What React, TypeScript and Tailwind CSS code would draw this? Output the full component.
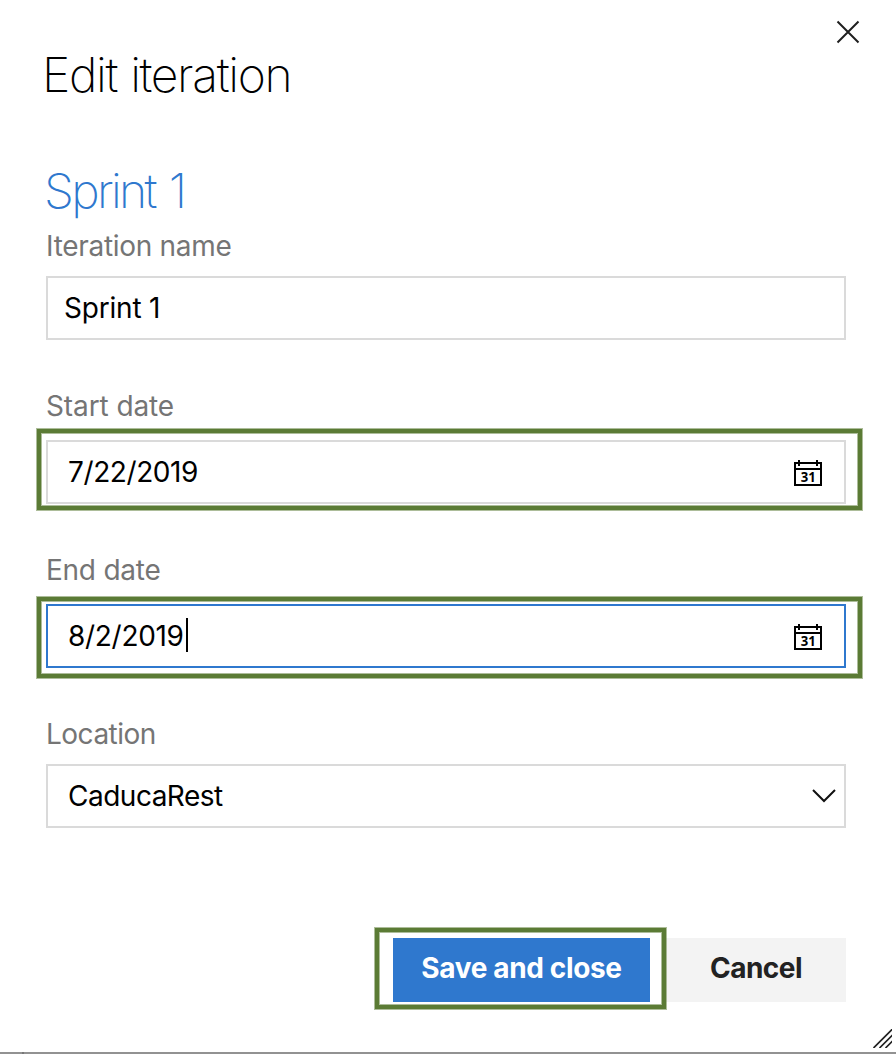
import type { ReactNode } from "react";

const highlight =
  "pointer-events-none absolute border-4 border-[#5b7b35] shadow-[0_0_0_1px_#5b7b3580,inset_0_0_0_1px_#5b7b3580]";

function Label({ children, className }: { children: ReactNode; className: string }) {
  return (
    <label className={`block h-8 w-max whitespace-nowrap text-[28px] leading-8 text-[#757575] ${className}`}>
      {children}
    </label>
  );
}

function CalendarIcon() {
  return (
    <svg width="28" height="28" viewBox="0 0 28 28" className="mt-1 shrink-0" aria-hidden="true">
      <path d="M1 3H27V25H1Z M1 9H27" fill="none" stroke="#000" strokeWidth="2" />
      <path d="M5 0V6M23 0V6" stroke="#000" strokeWidth="2" />
      <text x="14.3" y="22" textAnchor="middle" fontFamily="'Open Sans', sans-serif" fontWeight="700" fontSize="14" textLength="15" lengthAdjust="spacingAndGlyphs">
        31
      </text>
    </svg>
  );
}

function Box({ children, className = "border-[#dadada]" }: { children: ReactNode; className?: string }) {
  return (
    <div className={`relative flex h-16 w-[800px] items-center border-2 text-[28px] leading-8 text-black ${className}`}>
      {children}
    </div>
  );
}

export default function App() {
  return (
    <main className="relative flex h-[1054px] w-[896px] flex-col overflow-hidden bg-white pl-[46px] font-['Inter',sans-serif]">
      <button className="absolute top-5 left-[836px] size-6" aria-label="Close">
        <svg width="24" height="24" viewBox="0 0 24 24">
          <path d="M1.5 1.5L22.5 22.5M22.5 1.5L1.5 22.5" stroke="#1f1f1f" strokeWidth="2" />
        </svg>
      </button>

      <h1 className="-ml-1 mt-[45px] h-[60px] w-max text-[48px] leading-[60px] font-extralight tracking-[-1.35px] [word-spacing:1px] text-black">
        Edit iteration
      </h1>
      <h2 className="-ml-0.5 mt-[56px] h-[60px] w-max text-[48px] leading-[60px] font-extralight tracking-[-2.65px] [word-spacing:3px] text-[#2f78ce]">
        Sprint 1
      </h2>

      <div className="mt-[9px]">
        <Label className="tracking-[-0.3px]">Iteration name</Label>
        <div className="mt-[14px]">
          <Box>
            <span className="ml-4 tracking-[-0.2px]">Sprint 1</span>
          </Box>
        </div>
      </div>

      <div className="mt-[50px]">
        <Label className="tracking-[-0.1px]">Start date</Label>
        <div className="relative mt-[18px]">
          <Box>
            <span className="ml-5 flex-1 tracking-[-0.4px]">7/22/2019</span>
            <span className="mr-[22px]"><CalendarIcon /></span>
          </Box>
          <div className={`${highlight} -top-[11px] -left-[9px] h-[81px] w-[825px]`} />
        </div>
      </div>

      <div className="mt-[50px]">
        <Label className="tracking-[-0.25px]">End date</Label>
        <div className="relative mt-[18px]">
          <Box className="border-[#2f78ce]">
            <span className="ml-5 tracking-[-0.3px]">8/2/2019</span>
            <span className="absolute top-[12px] left-[138px] h-[34px] w-[2px] bg-black" />
            <span className="mr-[22px] ml-auto"><CalendarIcon /></span>
          </Box>
          <div className={`${highlight} -top-[7px] -left-[9px] h-[81px] w-[825px]`} />
        </div>
      </div>

      <div className="mt-[50px]">
        <Label className="tracking-[-0.5px]">Location</Label>
        <div className="mt-[14px]">
          <Box>
            <span className="ml-5 flex-1 tracking-[-0.5px]">CaducaRest</span>
            <svg width="24" height="14" viewBox="0 0 24 14" className="mr-2" aria-hidden="true">
              <path d="M1 1L12 12L23 1" fill="none" stroke="#111" strokeWidth="2" />
            </svg>
          </Box>
        </div>
      </div>

      <div className="mt-[110px] flex w-[800px] justify-end gap-4">
        <div className="relative">
          <button className="flex h-16 w-[257px] items-center justify-center bg-[#2f78ce] pb-1 text-[28px] leading-8 font-bold tracking-[-0.35px] whitespace-nowrap text-white">
            <span>Save and close</span>
          </button>
          <div className={`${highlight} -top-[10px] -left-[18px] z-10 h-[81px] w-[291px]`} />
        </div>
        <button className="flex h-16 w-[180px] items-center justify-center bg-[#f3f3f3] pb-1 text-[28px] leading-8 font-bold tracking-[-0.5px] text-[#222]">
          <span>Cancel</span>
        </button>
      </div>

      <svg className="absolute top-[1029px] left-[873px]" width="19" height="19" viewBox="0 0 19 19" aria-hidden="true">
        <path d="M0.5 19L19.5 0M6.5 19L19.5 6M12.5 19L19.5 12" stroke="#222" strokeWidth="1.7" />
      </svg>
      <div className="absolute bottom-0 left-0 flex h-[2px] w-full bg-[#929292]">
        <span className="ml-[22px] h-full w-[2px] bg-[#777]" />
      </div>
    </main>
  );
}
